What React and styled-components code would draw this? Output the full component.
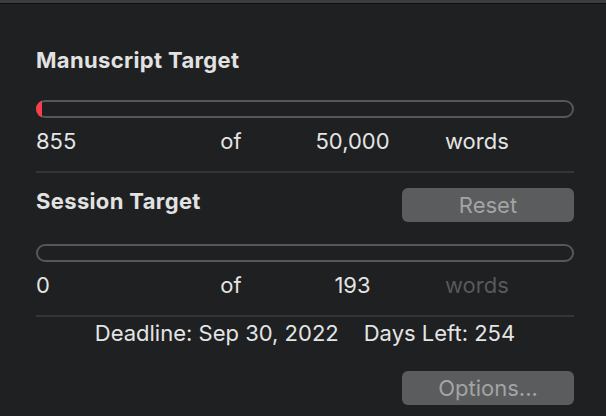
import React from "react"
import styled, { createGlobalStyle } from "styled-components"

const GlobalStyle = createGlobalStyle`
    html, body {
        margin: 0;
        background: #1e2021;
    }
    body {
        font-family: Inter, "Noto Sans", sans-serif;
        -webkit-font-smoothing: antialiased;
    }
`

const TitleEdge = styled.div`
    height: 3px;
    background: #3b3c3d;
    border-bottom: 1px solid #0c0d0d;
`

const Panel = styled.div`
    display: flex;
    flex-direction: column;
    padding: 0 32px 0 36px;
`

const Heading = styled.h2`
    margin: 0;
    font-size: 22px;
    line-height: 26px;
    font-weight: 700;
    letter-spacing: 0.35px;
    color: #e2e2e2;
`

const Track = styled.div`
    height: 18px;
    border-radius: 9px;
    overflow: hidden;
    box-shadow: inset 0 0 0 2px #555758;
    display: flex;
`

const Fill = styled.div`
    height: 100%;
    background: #fa3d4b;
`

const CountRow = styled.div`
    display: grid;
    grid-template-columns: 150px 90px 153px 1fr;
    font-size: 22px;
    line-height: 26px;
    color: #e4e4e4;
`

const Cell = styled.span`
    text-align: ${(p) => p.$align || "left"};
    padding-left: ${(p) => p.$indent || 0}px;
    color: ${(p) => (p.$dim ? "#58595a" : "inherit")};
`

const Divider = styled.hr`
    margin: 0;
    border: none;
    height: 2px;
    background: #333536;
`

const SectionHead = styled.div`
    display: flex;
    justify-content: space-between;
    align-items: flex-start;
`

const Button = styled.button`
    width: 172px;
    height: 34px;
    border: none;
    border-radius: 6px;
    background: #5a5c5d;
    color: #a3a4a4;
    font-family: inherit;
    font-size: 22px;
    padding: 0;
`

const Footer = styled.div`
    display: flex;
    justify-content: center;
    gap: 25px;
    font-size: 22px;
    line-height: 26px;
    color: #e4e4e4;
`

const ButtonRow = styled.div`
    display: flex;
    justify-content: flex-end;
`

const Gap = styled.div`
    height: ${(p) => p.$h}px;
    flex: none;
`

function Counts({ current, target, dimUnit }) {
    return (
        <CountRow>
            <Cell>{current}</Cell>
            <Cell $align="center">of</Cell>
            <Cell $align="center">{target}</Cell>
            <Cell $indent={16} $dim={dimUnit}>words</Cell>
        </CountRow>
    )
}

export default function App() {
    return (
        <>
            <GlobalStyle />
            <TitleEdge />
            <Panel>
                <Gap $h={43} />
                <Heading>Manuscript Target</Heading>
                <Gap $h={27} />
                <Track>
                    <Fill style={{ width: 6 }} />
                </Track>
                <Gap $h={10} />
                <Counts current="855" target="50,000" />
                <Gap $h={17} />
                <Divider />
                <Gap $h={15} />
                <SectionHead>
                    <Heading>Session Target</Heading>
                    <Button>Reset</Button>
                </SectionHead>
                <Gap $h={22} />
                <Track />
                <Gap $h={10} />
                <Counts current="0" target="193" dimUnit />
                <Gap $h={17} />
                <Divider />
                <Gap $h={3} />
                <Footer>
                    <span>Deadline: Sep 30, 2022</span>
                    <span>Days Left: 254</span>
                </Footer>
                <Gap $h={25} />
                <ButtonRow>
                    <Button>Options...</Button>
                </ButtonRow>
            </Panel>
        </>
    )
}
